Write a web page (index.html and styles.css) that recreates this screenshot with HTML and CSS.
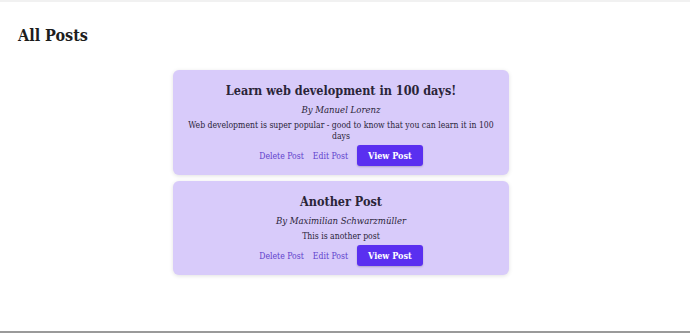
FILE: index.html
```html
<!DOCTYPE html>
<html>
  <head>
    <meta charset="UTF-8">
    <title>All Posts</title>
    <link rel="stylesheet" href="styles.css">
  </head>
  <body>
    <main id="pagina">
      <h1>All Posts</h1>
      <ul class="posts">
        <li class="post">
          <h2>Learn web development in 100 days!</h2>
          <p class="autor">By Manuel Lorenz</p>
          <p class="resumen">Web development is super popular - good to know that you can learn it in 100 days</p>
          <div class="acciones">
            <button class="btn-alt">Delete Post</button>
            <a class="btn-alt" href="#">Edit Post</a>
            <a class="btn" href="#">View Post</a>
          </div>
        </li>
        <li class="post">
          <h2>Another Post</h2>
          <p class="autor">By Maximilian Schwarzmüller</p>
          <p class="resumen">This is another post</p>
          <div class="acciones">
            <button class="btn-alt">Delete Post</button>
            <a class="btn-alt" href="#">Edit Post</a>
            <a class="btn" href="#">View Post</a>
          </div>
        </li>
      </ul>
    </main>
  </body>
</html>
```

FILE: styles.css
```css
html {
  height: 100%;
}

body {
  margin: 0;
  min-height: 100%;
  box-sizing: border-box;
  border-top: 2px solid #f1f1f1;
  border-bottom: 2px solid #9a9a9a;
  font-family: "DejaVu Serif Condensed", "DejaVu Serif", serif;
  font-stretch: condensed;
  color: #2a2438;
  background-color: #fff;
}

#pagina {
  padding: 24px 18px;
}

h1 {
  margin: 0 0 25px 0;
  font-size: 16px;
  font-weight: bold;
  color: #1d1d1d;
}

.posts {
  list-style: none;
  margin: 0 auto;
  padding: 0;
  max-width: 336px;
  display: flex;
  flex-direction: column;
  gap: 6px;
  position: relative;
  left: -4px;
}

.post {
  background-color: #d8cbfa;
  border-radius: 6px;
  box-shadow: 0 1px 4px rgba(0, 0, 0, 0.12);
  padding: 13px 14px 9px;
  text-align: center;
}

.post h2 {
  margin: 0 0 6px 0;
  font-size: 12.5px;
  font-weight: bold;
}

.autor {
  margin: 0 0 5px 0;
  font-size: 9.5px;
  font-style: italic;
}

.resumen {
  margin: 0 0 3px 0;
  font-size: 8.6px;
  line-height: 11px;
}

.acciones {
  display: flex;
  justify-content: center;
  align-items: center;
  gap: 9px;
}

.btn-alt {
  font: inherit;
  font-size: 8.6px;
  color: #5f42cc;
  background: none;
  border: none;
  padding: 0;
  text-decoration: none;
  cursor: pointer;
}

.btn {
  font-size: 9px;
  font-weight: bold;
  color: #fff;
  background-color: #5a2ff0;
  border-radius: 3px;
  padding: 5.5px 11px;
  text-decoration: none;
  box-shadow: 0 1px 2px rgba(0, 0, 0, 0.2);
}
```
